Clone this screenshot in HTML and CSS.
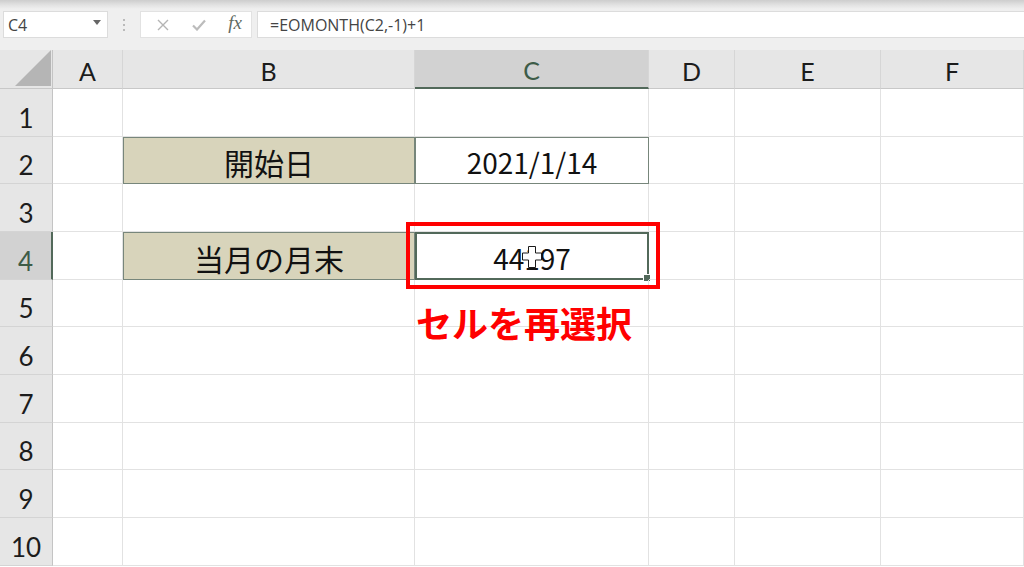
FILE: index.html
```html
<!DOCTYPE html>
<html lang="ja">
<head>
    <meta charset="UTF-8">
    <meta name="viewport" content="width=device-width, initial-scale=1.0">
    <title>EOMONTH - 当月の月末</title>
    <link rel="stylesheet" href="styles.css">
</head>
<body>
    <header class="formula-bar">
        <div class="name-box">
            <span>C4</span>
            <svg class="caret" width="8" height="5" viewBox="0 0 8 5"><path d="M0 0h8L4 5z" fill="#666"/></svg>
        </div>
        <div class="bar-grip"><i></i><i></i><i></i></div>
        <div class="bar-buttons">
            <svg width="12" height="12" viewBox="0 0 12 12"><path d="M1 1l10 10M11 1L1 11" stroke="#b4b4b4" stroke-width="1.4" fill="none"/></svg>
            <svg width="14" height="12" viewBox="0 0 14 12"><path d="M1 6.5l4 4L13 1.5" stroke="#bcbcbc" stroke-width="2.2" fill="none"/></svg>
            <span class="fx">fx</span>
        </div>
        <div class="formula-input">=EOMONTH(C2,-1)+1</div>
    </header>

    <main class="sheet-wrap">
        <div class="sheet">
            <div class="corner"><svg width="36" height="36" viewBox="0 0 36 36"><path d="M36 0V36H0z" fill="#b5b5b5"/></svg></div>
            <div class="col-head">A</div>
            <div class="col-head">B</div>
            <div class="col-head is-active">C</div>
            <div class="col-head">D</div>
            <div class="col-head">E</div>
            <div class="col-head">F</div>

            <div class="row-head">1</div>
            <div class="cell"></div><div class="cell"></div><div class="cell"></div><div class="cell"></div><div class="cell"></div><div class="cell"></div>

            <div class="row-head">2</div>
            <div class="cell"></div>
            <div class="cell label">開始日</div>
            <div class="cell value">2021/1/14</div>
            <div class="cell"></div><div class="cell"></div><div class="cell"></div>

            <div class="row-head">3</div>
            <div class="cell"></div><div class="cell"></div><div class="cell"></div><div class="cell"></div><div class="cell"></div><div class="cell"></div>

            <div class="row-head is-active">4</div>
            <div class="cell"></div>
            <div class="cell label">当月の月末</div>
            <div class="cell value is-selected">
                44197
                <svg class="cursor" width="20" height="22" viewBox="0 0 20 22"><path d="M6.5 0.5h7v6.5h6v7h-6v7.5h-7V14H0.5V7h6z" fill="#fff" stroke="#1a1a1a" stroke-width="1"/></svg>
            </div>
            <div class="cell"></div><div class="cell"></div><div class="cell"></div>

            <div class="row-head">5</div>
            <div class="cell"></div><div class="cell"></div><div class="cell"></div><div class="cell"></div><div class="cell"></div><div class="cell"></div>

            <div class="row-head">6</div>
            <div class="cell"></div><div class="cell"></div><div class="cell"></div><div class="cell"></div><div class="cell"></div><div class="cell"></div>

            <div class="row-head">7</div>
            <div class="cell"></div><div class="cell"></div><div class="cell"></div><div class="cell"></div><div class="cell"></div><div class="cell"></div>

            <div class="row-head">8</div>
            <div class="cell"></div><div class="cell"></div><div class="cell"></div><div class="cell"></div><div class="cell"></div><div class="cell"></div>

            <div class="row-head">9</div>
            <div class="cell"></div><div class="cell"></div><div class="cell"></div><div class="cell"></div><div class="cell"></div><div class="cell"></div>

            <div class="row-head">10</div>
            <div class="cell"></div><div class="cell"></div><div class="cell"></div><div class="cell"></div><div class="cell"></div><div class="cell"></div>
        </div>

        <!-- annotation drawn over the grid -->
        <div class="callout-box"></div>
        <div class="callout-text">セルを再選択</div>
    </main>
</body>
</html>
```

FILE: styles.css
```css
:root {
    --bar-bg: #efefef;
    --head-bg: #e6e6e6;
    --head-active: #d2d2d2;
    --grid: #e2e2e2;
    --accent: #52695a;
    --tan: #d8d4bb;
    --cell-border: #77867b;
    --red: #ff0000;
}

* {
    box-sizing: border-box;
    margin: 0;
    padding: 0;
}

body {
    font-family: 'Open Sans', 'Noto Sans CJK JP', sans-serif;
    background: #fff;
    color: #111;
    width: 1024px;
    height: 567px;
    overflow: hidden;
}

/* Formula bar */
.formula-bar {
    height: 50px;
    display: flex;
    padding: 11px 0 12px 3px;
    background: linear-gradient(#cdcdcd 0, #e2e2e2 5px, var(--bar-bg) 9px);
}

.name-box {
    width: 105px;
    background: #fff;
    border: 1px solid #dcdcdc;
    display: flex;
    align-items: center;
    justify-content: space-between;
    padding: 1px 6px 0 4px;
    font-size: 16px;
    color: #444;
}

.name-box .caret {
    margin-top: -5px;
}

.bar-grip {
    width: 32px;
    display: flex;
    flex-direction: column;
    align-items: center;
    justify-content: center;
    gap: 3px;
}

.bar-grip i {
    width: 2px;
    height: 2px;
    border-radius: 50%;
    background: #a8a8a8;
}

.bar-buttons {
    width: 112px;
    background: #fff;
    border: 1px solid #e2e2e2;
    display: grid;
    grid-template-columns: 40px 36px 36px;
    align-items: center;
    justify-items: center;
}

.bar-buttons svg:first-child {
    margin-left: 3px;
}

.fx {
    font-family: 'Liberation Serif', serif;
    font-style: italic;
    font-size: 19px;
    color: #5f6b63;
    margin-top: -3px;
}

.formula-input {
    flex: 1;
    margin-left: 5px;
    background: #fff;
    border: 1px solid #dcdcdc;
    border-right: none;
    display: flex;
    align-items: center;
    padding: 1px 0 0 12px;
    font-size: 16px;
    color: #444;
}

/* Sheet */
.sheet-wrap {
    position: relative;
}

.sheet {
    display: grid;
    grid-template-columns: 53px 70px 292px 234px 86px 146px 143px;
    grid-template-rows: 39px 48px 47px 48px 48px 47px 48px 48px 47px 48px 48px;
}

.corner {
    background: var(--head-bg);
    border-right: 1px solid #c4c4c4;
    border-bottom: 1px solid #c8c8c8;
    display: flex;
    align-items: flex-end;
    justify-content: flex-end;
    padding: 0 1px 2px 0;
}

.col-head,
.row-head {
    background: var(--head-bg);
    font-family: Lato, 'Liberation Sans', sans-serif;
    color: #1c1c1c;
    display: flex;
    justify-content: center;
    align-items: flex-end;
}

.col-head {
    font-size: 25px;
    line-height: 25px;
    padding-bottom: 4px;
    border-right: 1px solid #d6d6d6;
    border-bottom: 1px solid #c8c8c8;
}

.row-head {
    font-size: 26px;
    line-height: 26px;
    padding-bottom: 5px;
    border-right: 1px solid #c4c4c4;
    border-bottom: 1px solid #d4d4d4;
}

.col-head.is-active {
    background: var(--head-active);
    color: #3d5c48;
    border-bottom: 2px solid var(--accent);
}

.row-head.is-active {
    background: var(--head-active);
    color: #3d5c48;
    border-right: 2px solid var(--accent);
}

.cell {
    position: relative;
    border-right: 1px solid var(--grid);
    border-bottom: 1px solid var(--grid);
    display: flex;
    justify-content: center;
    align-items: flex-end;
    font-family: 'Noto Sans CJK JP', sans-serif;
    font-size: 28px;
    line-height: 28px;
    padding-bottom: 7px;
}

.cell.label {
    background: var(--tan);
    border: 1px solid var(--cell-border);
    font-size: 30px;
    line-height: 30px;
    padding-bottom: 6px;
}

.cell.value {
    border: 1px solid var(--cell-border);
}

.cell.is-selected {
    border: 2px solid var(--accent);
    padding-bottom: 6px;
}

.cell.is-selected::after {
    content: "";
    position: absolute;
    right: -4px;
    bottom: -4px;
    width: 6px;
    height: 6px;
    background: var(--accent);
    border: 1px solid #fff;
}

.cursor {
    position: absolute;
    left: 105px;
    top: 12px;
}

/* Red annotation */
.callout-box {
    position: absolute;
    left: 406px;
    top: 172px;
    width: 254px;
    height: 67px;
    border: 4px solid var(--red);
}

.callout-text {
    position: absolute;
    left: 416px;
    top: 254px;
    font-family: 'Noto Sans CJK JP', sans-serif;
    font-weight: 700;
    font-size: 36px;
    line-height: 36px;
    color: var(--red);
}
```
